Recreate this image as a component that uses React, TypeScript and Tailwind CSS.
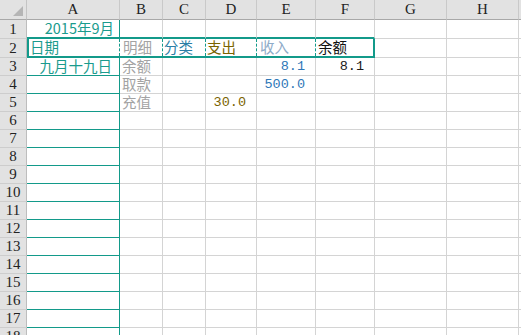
import React from "react";

type CellProps = {
  text?: string;
  className?: string;
  textClass?: string;
  dash?: boolean;
};

// one worksheet cell; "dash" adds the dashed teal divider of row 2
const Cell: React.FC<CellProps> = ({ text, className = "", textClass = "", dash }) => {
  return (
    <div className={`flex items-stretch overflow-visible whitespace-nowrap ${className}`}>
      <div className={`flex-1 flex items-center leading-none ${textClass}`}>{text}</div>
      {dash && <div className="w-0 self-stretch border-r border-dashed border-[#139a8a]" />}
    </div>
  );
};

const colHeads = ["A", "B", "C", "D", "E", "F", "G", "H", ""];

const grid = "border-r border-b border-[#d4d4d4]";
const colA = "border-r border-b border-[#139a8a]";
const rowHead =
  "h-[18px] bg-[#e2e2e2] border-r border-b border-r-[#bdbdbd] border-b-[#cdcdcd] flex items-center justify-center font-['Liberation_Serif',serif] text-[15px] text-[#222] leading-none";

const numRight = "justify-end pr-[10px] font-['Liberation_Mono',monospace] text-[13.5px]";

type Row = { n: number; a?: string; b?: string; d?: string; e?: string; f?: string };

const body: Row[] = [
  { n: 3, a: "九月十九日", b: "余额", e: "8.1", f: "8.1" },
  { n: 4, b: "取款", e: "500.0" },
  { n: 5, b: "充值", d: "30.0" },
  ...Array.from({ length: 13 }, (_, i) => ({ n: i + 6 })),
];

export default function App() {
  return (
    <div className="w-[521px] h-[335px] overflow-hidden bg-white font-['Noto_Sans_CJK_SC',sans-serif] text-[14.5px]">
      <div className="grid grid-cols-[27px_93px_43px_43px_51px_59px_59px_72px_72px_72px] w-max">
        {/* Column headers */}
        <div className="h-[20px] bg-[#e2e2e2] border-r border-b border-r-[#c4c4c4] border-b-[#a8a8a8] flex items-end justify-end pr-[3px] pb-[3px]">
          <svg width="10" height="10" viewBox="0 0 10 10">
            <polygon points="10,0 10,10 0,10" fill="#b5b5b5" />
          </svg>
        </div>
        {colHeads.map((c, i) => (
          <div
            key={i}
            className="h-[20px] bg-[#e2e2e2] border-r border-b border-r-[#c9c9c9] border-b-[#a8a8a8] flex items-center justify-center font-['Liberation_Serif',serif] text-[15px] text-[#222] leading-none"
          >
            {c}
          </div>
        ))}

        {/* Row 1 */}
        <div className={`${rowHead} h-[19px]`}>1</div>
        <Cell
          className="h-[19px] border-r border-b-2 border-[#139a8a]"
          textClass="justify-end pr-[5px] text-[#1a9b8d]"
          text="2015年9月"
        />
        {[0, 1, 2, 3, 4].map((i) => (
          <Cell key={i} className="h-[19px] border-r border-b-2 border-r-[#d4d4d4] border-b-[#139a8a]" />
        ))}
        {[0, 1, 2].map((i) => (
          <Cell key={i} className={`h-[19px] ${grid}`} />
        ))}

        {/* Row 2 — boxed header row */}
        <div className={`${rowHead} h-[19px]`}>2</div>
        <Cell
          dash
          className="h-[19px] border-l-2 border-b-2 border-[#139a8a]"
          textClass="pl-[1px] text-[#1a9b8d]"
          text="日期"
        />
        <Cell dash className="h-[19px] border-b-2 border-[#139a8a]" textClass="pl-[3px] text-[#a3a3a3]" text="明细" />
        <Cell dash className="h-[19px] border-b-2 border-[#139a8a]" textClass="pl-[1px] text-[#2a7ea6]" text="分类" />
        <Cell dash className="h-[19px] border-b-2 border-[#139a8a]" textClass="pl-[1px] text-[#7a6300]" text="支出" />
        <Cell dash className="h-[19px] border-b-2 border-[#139a8a]" textClass="pl-[3px] text-[#8eabc8]" text="收入" />
        <Cell className="h-[19px] border-b-2 border-r-2 border-[#139a8a]" textClass="pl-[2px] text-[#111]" text="余额" />
        {[0, 1, 2].map((i) => (
          <Cell key={i} className={`h-[19px] ${grid}`} />
        ))}

        {/* Data rows */}
        {body.map((r) => (
          <React.Fragment key={r.n}>
            <div className={rowHead}>{r.n}</div>
            <Cell className={`h-[18px] ${colA}`} textClass="justify-end pr-[7px] text-[#1a9b8d]" text={r.a} />
            <Cell className={`h-[18px] ${grid}`} textClass="pl-[2px] text-[#a3a3a3]" text={r.b} />
            <Cell className={`h-[18px] ${grid}`} />
            <Cell className={`h-[18px] ${grid}`} textClass={`${numRight} text-[#7a6300]`} text={r.d} />
            <Cell className={`h-[18px] ${grid}`} textClass={`${numRight} text-[#2f78b8]`} text={r.e} />
            <Cell className={`h-[18px] ${grid}`} textClass={`${numRight} text-[#1a1a1a]`} text={r.f} />
            <Cell className={`h-[18px] ${grid}`} />
            <Cell className={`h-[18px] ${grid}`} />
            <Cell className={`h-[18px] ${grid}`} />
          </React.Fragment>
        ))}
      </div>
    </div>
  );
}
